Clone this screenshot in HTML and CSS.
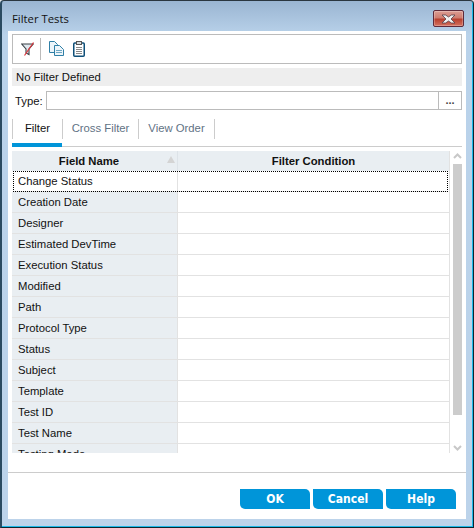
FILE: index.html
```html
<!DOCTYPE html>
<html lang="en">
<head>
    <meta charset="UTF-8">
    <title>Filter Tests</title>
    <link rel="stylesheet" href="styles.css">
</head>
<body>
    <div class="window">
        <div class="titlebar">
            <span class="title">Filter Tests</span>
            <button class="close" aria-label="Close">
                <svg width="15" height="10" viewBox="0 0 15 10">
                    <path d="M1 1h3.6l2.9 2 2.9-2H14L10 5l4 4h-3.6L7.5 7l-2.9 2H1l4-4z" fill="#f0f0f0" stroke="#54404a" stroke-width="0.8"/>
                </svg>
            </button>
        </div>
        <div class="client">
            <div class="toolbar">
                <svg class="tool-icon" width="13" height="14" viewBox="0 0 13 14">
                    <path d="M0.7 2h11.6L8 7v5.5L5 11V7z" fill="#dfe8ee" stroke="#3a4046" stroke-width="1.1"/>
                    <path d="M12.5 0.5L3.5 13.5" stroke="#e0343a" stroke-width="1.2"/>
                </svg>
                <span class="tool-sep"></span>
                <svg class="tool-icon" width="15" height="16" viewBox="0 0 15 16">
                    <path d="M0.5 0.5h5l3 3v8h-8z" fill="#edf5fa" stroke="#2f7fa6"/>
                    <path d="M5.5 4.5h5l4 4v6h-9z" fill="#edf5fa" stroke="#2f7fa6"/>
                    <path d="M7 9.5h6M7 11.5h6" stroke="#6fa8c4"/>
                </svg>
                <svg class="tool-icon clip" width="12" height="16" viewBox="0 0 12 16">
                    <rect x="0.75" y="2" width="10.5" height="13.25" rx="1" fill="#fff" stroke="#0f4f78" stroke-width="1.5"/>
                    <rect x="3.5" y="0.5" width="5" height="3" fill="#d8dde0" stroke="#555"/>
                    <path d="M3 6.5h6M3 8.5h6M3 10.5h6M3 12.5h6" stroke="#888"/>
                </svg>
            </div>
            <div class="status">No Filter Defined</div>
            <div class="type-row">
                <label class="type-label">Type:</label>
                <div class="type-input">
                    <span class="type-field"></span>
                    <span class="type-more">...</span>
                </div>
            </div>
            <div class="tabs">
                <div class="tab active">Filter</div>
                <div class="tab">Cross Filter</div>
                <div class="tab">View Order</div>
            </div>
            <div class="grid-wrap">
                <div class="grid">
                    <div class="grid-head">
                        <div class="head-name">Field Name<span class="sort"></span></div>
                        <div class="head-cond">Filter Condition</div>
                    </div>
                    <div class="row selected"><div class="name">Change Status</div><div class="cond"></div></div>
                    <div class="row"><div class="name">Creation Date</div><div class="cond"></div></div>
                    <div class="row"><div class="name">Designer</div><div class="cond"></div></div>
                    <div class="row"><div class="name">Estimated DevTime</div><div class="cond"></div></div>
                    <div class="row"><div class="name">Execution Status</div><div class="cond"></div></div>
                    <div class="row"><div class="name">Modified</div><div class="cond"></div></div>
                    <div class="row"><div class="name">Path</div><div class="cond"></div></div>
                    <div class="row"><div class="name">Protocol Type</div><div class="cond"></div></div>
                    <div class="row"><div class="name">Status</div><div class="cond"></div></div>
                    <div class="row"><div class="name">Subject</div><div class="cond"></div></div>
                    <div class="row"><div class="name">Template</div><div class="cond"></div></div>
                    <div class="row"><div class="name">Test ID</div><div class="cond"></div></div>
                    <div class="row"><div class="name">Test Name</div><div class="cond"></div></div>
                    <div class="row"><div class="name">Testing Mode</div><div class="cond"></div></div>
                </div>
                <div class="scrollbar">
                    <svg width="9" height="6" viewBox="0 0 9 6"><path d="M1 5l3.5-3.5L8 5" fill="none" stroke="#c8c8c8" stroke-width="2"/></svg>
                    <div class="thumb"></div>
                    <svg class="arrow-down" width="9" height="6" viewBox="0 0 9 6"><path d="M1 1l3.5 3.5L8 1" fill="none" stroke="#c8c8c8" stroke-width="2"/></svg>
                </div>
            </div>
            <div class="footer">
                <button class="btn">OK</button>
                <button class="btn">Cancel</button>
                <button class="btn">Help</button>
            </div>
        </div>
    </div>
</body>
</html>
```

FILE: styles.css
```css
html, body {
    margin: 0;
    padding: 0;
    height: 100%;
    background-color: #dfe6ea;
}
body {
    font-family: "Liberation Sans", Arial, sans-serif;
    font-size: 11.3px;
    color: #111;
}
.window {
    box-sizing: border-box;
    width: 474px;
    height: 528px;
    padding: 1px 0;
    border-top: 1px solid #2a3640;
    border-left: 2px solid #2a4a60;
    border-right: 1px solid #0a2530;
    border-bottom: 1px solid #0a2530;
    border-radius: 4px 4px 0 0;
    background: linear-gradient(#9ab5d2 0, #b9d2ea 34px, #bcd3ea 100%);
    box-shadow: inset -1px -1px 0 #1cb8e8;
    display: flex;
    flex-direction: column;
}
.titlebar {
    height: 29px;
    flex: none;
    display: flex;
    align-items: flex-start;
    justify-content: space-between;
    padding: 0 9px 0 10px;
    box-sizing: border-box;
}
.title {
    margin-top: 9px;
    font-family: "Open Sans", sans-serif;
    font-size: 11.3px;
    color: #111;
}
.close {
    width: 31px;
    height: 17px;
    margin-top: 8px;
    padding: 0;
    border: 1px solid #5e2a3a;
    border-radius: 2px;
    background: linear-gradient(#dc9d93 0, #cf7d70 45%, #b8402f 55%, #d4715f 100%);
    box-shadow: inset 0 0 0 1px rgba(255, 255, 255, 0.25);
    display: flex;
    align-items: center;
    justify-content: center;
}
.client {
    flex: 1;
    margin: 0 7px 7px 6px;
    background-color: #fff;
    padding: 3px 4px 0 4px;
    display: flex;
    flex-direction: column;
}
.toolbar {
    box-sizing: border-box;
    height: 30px;
    border: 1px solid #bbb;
    display: flex;
    align-items: center;
    padding-left: 8px;
}
.tool-sep {
    width: 1px;
    height: 22px;
    background-color: #bbb;
    margin: 0 8px 0 6px;
}
.clip {
    margin-left: 9px;
}
.status {
    height: 18px;
    line-height: 18px;
    margin-top: 4px;
    padding-left: 4px;
    background-color: #eee;
}
.type-row {
    display: flex;
    align-items: center;
    margin-top: 5px;
    height: 19px;
}
.type-label {
    width: 34px;
    padding-left: 3px;
    box-sizing: border-box;
}
.type-input {
    flex: 1;
    height: 19px;
    box-sizing: border-box;
    border: 1px solid #bbb;
    display: flex;
}
.type-field {
    flex: 1;
}
.type-more {
    width: 22px;
    border-left: 1px solid #bbb;
    text-align: center;
    font-weight: bold;
    line-height: 17px;
    color: #444;
    font-size: 11px;
}
.tabs {
    display: flex;
    margin-top: 9px;
    height: 27px;
    border-bottom: 1px solid #ccc;
}
.tab {
    width: 76px;
    box-sizing: border-box;
    height: 20px;
    line-height: 18px;
    text-align: center;
    border-right: 1px solid #ccc;
    color: #5f7284;
}
.tab.active {
    width: 50px;
    color: #111;
    border-left: 1px solid #ccc;
    border-right: none;
    position: relative;
}
.tab.active::after {
    content: "";
    position: absolute;
    left: -1px;
    right: 0;
    top: 24px;
    height: 4px;
    background-color: #0095d9;
}
.tab.active + .tab {
    border-left: 1px solid #ccc;
    width: 77px;
}
.grid-wrap {
    display: flex;
    margin-top: 4px;
    height: 302px;
}
.grid {
    width: 437px;
    overflow: hidden;
    border-right: 1px solid #e2e2e2;
}
.grid-head {
    display: flex;
    height: 20px;
    background-color: #e9eef2;
    font-weight: bold;
    line-height: 20px;
    text-align: center;
}
.head-name {
    width: 166px;
    box-sizing: border-box;
    padding-right: 11px;
    border-right: 1px solid #dde3e8;
    position: relative;
}
.sort {
    position: absolute;
    right: 2px;
    top: 5px;
    width: 0;
    height: 0;
    border-left: 4px solid transparent;
    border-right: 4px solid transparent;
    border-bottom: 7px solid #d4d4d4;
}
.head-cond {
    flex: 1;
}
.row {
    display: flex;
    height: 21px;
    box-sizing: border-box;
    border-bottom: 1px solid #e2e2e2;
    line-height: 20px;
}
.name {
    width: 166px;
    box-sizing: border-box;
    padding-left: 6px;
    background-color: #e9eef2;
    border-right: 1px solid #e2e2e2;
}
.cond {
    flex: 1;
}
.row.selected {
    margin: 0 1px;
    outline: 1px dotted #000;
    outline-offset: -1px;
}
.row.selected .name {
    width: 165px;
    padding-left: 5px;
    background-color: #fff;
}
.scrollbar {
    width: 9px;
    margin-left: 3px;
    display: flex;
    flex-direction: column;
    align-items: center;
    padding-top: 2px;
    gap: 5px;
}
.thumb {
    width: 9px;
    flex: none;
    height: 251px;
    background-color: #ccc;
}
.arrow-down {
    margin-top: auto;
    margin-bottom: 2px;
}
.footer {
    margin: 19px -4px 0 -4px;
    border-top: 1px solid #ccc;
    padding: 16px 10px 0 0;
    display: flex;
    justify-content: flex-end;
    gap: 3px;
}
.btn {
    width: 70px;
    height: 20px;
    padding: 0;
    border: none;
    border-radius: 0 5px 0 5px;
    background-color: #0095d9;
    color: #fff;
    font-family: "DejaVu Sans", sans-serif;
    font-stretch: condensed;
    font-weight: bold;
    font-size: 12px;
}
```
